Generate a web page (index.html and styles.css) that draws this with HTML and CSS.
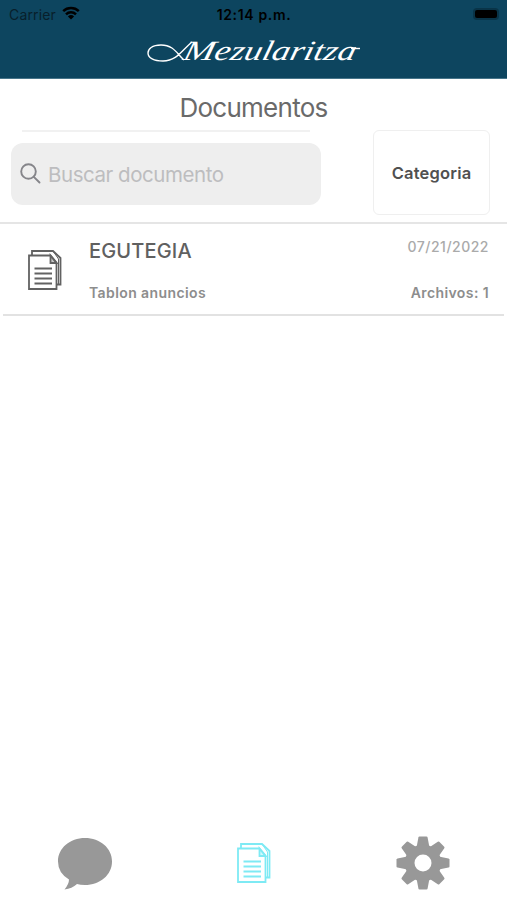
FILE: index.html
```html
<!DOCTYPE html>
<html lang="es">

<head>
    <meta charset="utf-8">
    <title>Mezularitza</title>
    <link rel="stylesheet" href="styles.css">
</head>

<body>
    <header class="header">
        <div class="status-bar">
            <div class="carrier">
                <span>Carrier</span>
                <svg class="wifi" viewBox="0 0 18 14">
                    <path d="M1.2 5.2A11.3 11.3 0 0 1 16.8 5.2M4 8.3A7.2 7.2 0 0 1 14 8.3" fill="none" stroke="#000" stroke-width="2.5"/>
                    <path d="M5.9 10.4a4.5 4.5 0 0 1 6.2 0L9 13.5z"/>
                </svg>
            </div>
            <span class="time">12:14 p.m.</span>
            <div class="battery"><span class="battery-level"></span></div>
        </div>
        <svg class="logo" viewBox="0 0 220 34">
            <path class="swash" d="M38 26C31 20 28 11 15 11C6 11 2 15 2 19C2 24 8 27 17 27C31 27 36 16 46 8"/>
            <text class="logo-text" transform="translate(6.5 0) skewX(-14)" y="26"><tspan x="36" textLength="31" lengthAdjust="spacingAndGlyphs">M</tspan><tspan x="67" textLength="141" lengthAdjust="spacingAndGlyphs">ezularitza</tspan></text>
            <path class="swash" d="M205 14.500H214"/>
        </svg>
    </header>

    <h1 class="title">Documentos</h1>

    <div class="filters">
        <div class="search-column">
            <div class="search">
                <svg class="search-icon" viewBox="0 0 22 22">
                    <circle cx="8.500" cy="8.500" r="7.300"/>
                    <path d="M13.800 13.800L19.500 19.500"/>
                </svg>
                <input class="search-input" type="text" placeholder="Buscar documento">
            </div>
        </div>
        <button class="category">Categoria</button>
    </div>

    <main class="list">
        <div class="item">
            <svg class="item-icon" viewBox="0 0 36 42">
                <use href="#documents"/>
            </svg>
            <div class="item-main">
                <span class="item-name">EGUTEGIA</span>
                <span class="item-detail">Tablon anuncios</span>
            </div>
            <div class="item-side">
                <span class="item-date">07/21/2022</span>
                <span class="item-detail">Archivos: 1</span>
            </div>
        </div>
    </main>

    <nav class="tabs">
        <a class="tab">
            <svg class="tab-icon" viewBox="0 0 56 54">
                <path d="M28 2C43 2 55 12 55 25.500S43 49 28 49Q23 49 20 48Q15 52.500 7.500 53.500Q12 48 12 43.500Q1 37 1 25.500C1 12 13 2 28 2z"/>
            </svg>
        </a>
        <a class="tab active">
            <svg class="tab-documents" viewBox="0 0 36 42">
                <g id="documents" class="documents">
                    <path d="M5 6V2H26L33.500 9V35.500H30"/>
                    <path class="thin" d="M26 2L31.500 10V35"/>
                    <path d="M2 6.500H23.500L29.500 13.500V40H2z"/>
                    <path class="fold" d="M23.500 6.500V14H29.500z"/>
                    <path d="M7.500 19.500H25M7.500 24.500H25M7.500 29.500H25M7.500 34.500H25"/>
                </g>
            </svg>
        </a>
        <a class="tab">
            <svg class="tab-icon" viewBox="-27 -27 54 54">
                <path id="tooth" d="M-6.200 -17L-4.600 -25.500Q-4.400 -26.500 -3.500 -26.500H3.500Q4.400 -26.500 4.600 -25.500L6.200 -17V17L4.600 25.500Q4.400 26.500 3.500 26.500H-3.500Q-4.400 26.500 -4.600 25.500L-6.200 17z"/>
                <use href="#tooth" transform="rotate(45)"/>
                <use href="#tooth" transform="rotate(90)"/>
                <use href="#tooth" transform="rotate(135)"/>
                <circle r="18.300"/>
                <circle class="gear-hole" r="8.500"/>
            </svg>
        </a>
    </nav>
</body>

</html>
```
FILE: styles.css
```css
* {
    box-sizing: border-box;
}

body {
    margin: 0;
    height: 100vh;
    display: flex;
    flex-direction: column;
    background: #fff;
    color: #666;
    font-family: Inter, 'Liberation Sans', sans-serif;
}

.header {
    height: 79px;
    display: flex;
    flex-direction: column;
    align-items: center;
    background: #0d455f;
    border-bottom: 1px solid #47758a;
}

.status-bar {
    width: 100%;
    height: 28px;
    padding: 0 8px 0 9px;
    display: grid;
    grid-template-columns: 1fr auto 1fr;
    align-items: center;
    color: #000;
    font-size: 14px;
}

.carrier {
    display: flex;
    align-items: center;
    gap: 6px;
    color: #081f2b;
    letter-spacing: 0.15px;
}

.wifi {
    width: 18px;
    height: 14px;
    margin-top: -2px;
}

.time {
    font-weight: 600;
    letter-spacing: 0.65px;
}

.battery {
    justify-self: end;
    width: 26px;
    height: 12px;
    margin-top: -1px;
    padding: 2px;
    border-radius: 4px;
    background: #093448;
}

.battery-level {
    display: block;
    width: 22px;
    height: 8px;
    border-radius: 2px;
    background: #000;
}

.logo {
    width: 220px;
    height: 34px;
    margin: 6px 0 0 5px;
}

.logo-text {
    fill: #fff;
    font: italic 28px 'Liberation Serif', serif;
}

.swash {
    fill: none;
    stroke: #fff;
    stroke-width: 1.4;
}

.title {
    height: 51px;
    margin: 0;
    padding-top: 4px;
    text-align: center;
    font-size: 26px;
    font-weight: 400;
    line-height: 50px;
    letter-spacing: -0.75px;
    color: #6a6a6a;
}

.filters {
    height: 94px;
    padding: 0 17px 0 11px;
    display: flex;
    justify-content: space-between;
    align-items: flex-start;
    border-bottom: 2px solid #e5e5e5;
}

.search-column::before {
    content: '';
    display: block;
    width: 288px;
    height: 2px;
    margin: 0 0 11px 11px;
    background: #f1f1f1;
}

.search {
    width: 310px;
    height: 62px;
    padding: 0 9px;
    display: flex;
    align-items: center;
    gap: 6px;
    border-radius: 12px;
    background: #eee;
}

.search-icon {
    width: 22px;
    height: 22px;
    fill: none;
    stroke: #85858a;
    stroke-width: 1.9;
    stroke-linecap: round;
}

.search-input {
    flex: 1;
    min-width: 0;
    padding: 0;
    border: none;
    outline: none;
    background: none;
    font: 20.5px Inter, sans-serif;
    letter-spacing: -0.45px;
}

.search-input::placeholder {
    color: #bdbdbf;
}

.category {
    width: 117px;
    height: 85px;
    padding: 0;
    border: 1px solid #efefef;
    border-radius: 6px;
    background: #fff;
    color: #505050;
    font: 600 16.5px Inter, sans-serif;
    letter-spacing: 0.2px;
}

.list {
    flex: 1;
    padding: 0 3px;
}

.item {
    height: 92px;
    padding: 0 15px 0 24px;
    display: flex;
    align-items: center;
    border-bottom: 2px solid #e2e2e2;
}

.item-icon {
    width: 36px;
    height: 42px;
    margin-top: 2px;
    color: #626262;
}

.documents {
    fill: none;
    stroke: currentColor;
    stroke-width: 1.8;
}

.thin {
    stroke-width: 1;
}

.fold {
    fill: currentColor;
    fill-opacity: 0.35;
}

.item-main,
.item-side {
    height: 70px;
    display: flex;
    flex-direction: column;
    justify-content: space-between;
}

.item-main {
    flex: 1;
    margin-left: 26px;
    padding: 4px 0 2px;
}

.item-side {
    align-items: flex-end;
    padding: 4px 0 2px;
}

.item-name {
    font-size: 20px;
    font-weight: 500;
    line-height: 26px;
    letter-spacing: 0.15px;
    color: #606060;
}

.item-date {
    font-size: 14px;
    font-weight: 500;
    line-height: 18px;
    letter-spacing: 0.5px;
    color: #aaa;
}

.item-detail {
    font-size: 14px;
    font-weight: 600;
    line-height: 18px;
    letter-spacing: 0.4px;
    color: #8d8d8d;
}

.tabs {
    height: 74px;
    display: grid;
    grid-template-columns: repeat(3, 1fr);
}

.tab {
    display: flex;
    justify-content: center;
    align-items: center;
    color: #989898;
}

.tab-icon {
    width: 56px;
    height: 54px;
    fill: currentColor;
}

.gear-hole {
    fill: #fff;
}

.tab-documents {
    width: 36px;
    height: 42px;
}

.active {
    color: #7eeaf4;
}
```
